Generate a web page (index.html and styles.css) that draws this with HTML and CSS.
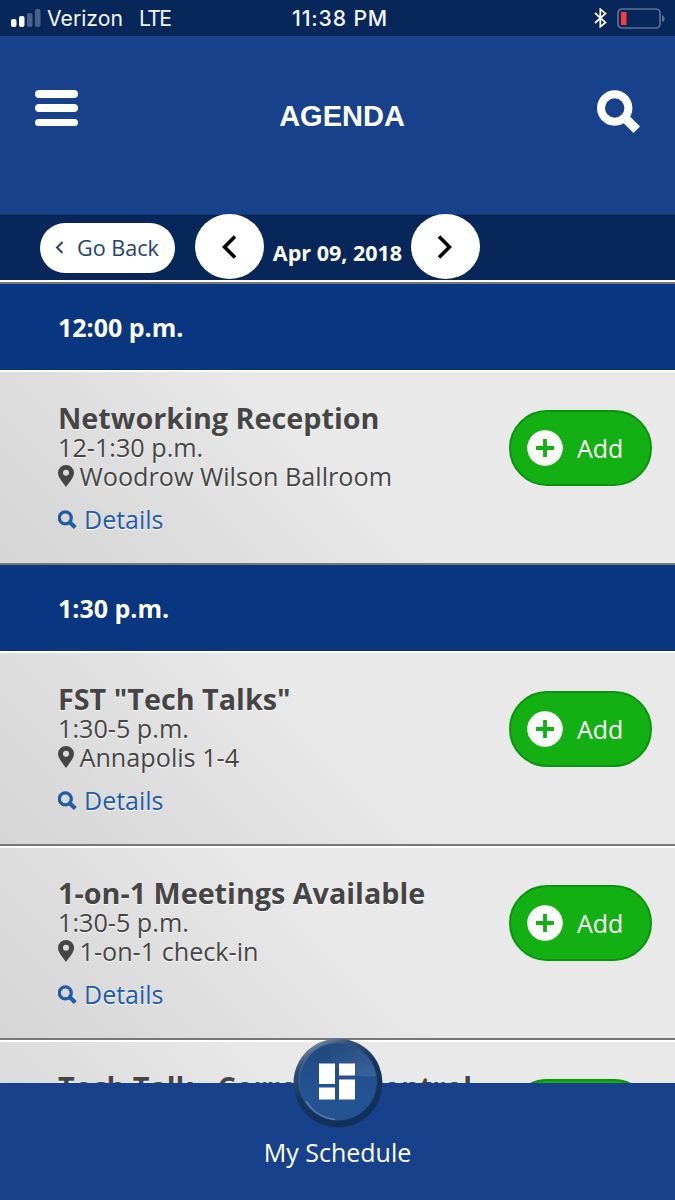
FILE: index.html
```
<!DOCTYPE html>
<html lang="en">
<head>
<meta charset="utf-8">
<title>Agenda</title>
<link rel="stylesheet" href="styles.css">
</head>
<body>
<svg width="0" height="0" class="defs">
  <symbol id="search" viewBox="0 0 43 43"><circle cx="17.7" cy="18" r="13.700" fill="none" stroke="currentColor" stroke-width="8"/><path d="M24.500 31L31 24.500L43 36.500L36.500 43Z" fill="currentColor"/></symbol>
  <symbol id="search-bold" viewBox="0 0 19 19"><circle cx="7.300" cy="7.800" r="6" fill="none" stroke="currentColor" stroke-width="3.300"/><path d="M11.500 12L17.300 17.500" stroke="currentColor" stroke-width="4.200"/></symbol>
  <symbol id="pin" viewBox="0 0 16 22"><path fill="currentColor" fill-rule="evenodd" d="M8 0a8 7.8 0 0 1 8 7.8C16 12.500 11.500 17 8 22C4.500 17 0 12.500 0 7.800A8 7.800 0 0 1 8 0ZM8 4.700a3 3 0 1 0 0 6a3 3 0 0 0 0-6Z"/></symbol>
  <symbol id="plus" viewBox="0 0 36 36"><circle cx="18" cy="18" r="17.800" fill="#fff"/><path d="M18 9v18M9 18h18" stroke="#12b012" stroke-width="3.800"/></symbol>
</svg>
<div class="screen">
  <div class="status">
    <svg class="signal" width="31" height="18" viewBox="0 0 31 18"><rect x="0" y="10" width="5.500" height="8" rx="2" fill="#fff"/><rect x="8" y="7" width="5.500" height="11" rx="2" fill="#fff"/><rect x="16" y="4" width="5.500" height="14" rx="2" fill="#4a6190"/><rect x="24" y="0" width="5.500" height="18" rx="2" fill="#4a6190"/></svg>
    <span class="carrier">Verizon</span><span class="network">LTE</span>
    <span class="clock">11:38 PM</span>
    <svg class="bluetooth" width="13" height="20" viewBox="0 0 13 20"><path d="M1 5L11.500 14.500L6.300 18.800V1.200L11.500 5.500L1 15" fill="none" stroke="#fff" stroke-width="1.700"/></svg>
    <svg class="battery" width="48" height="21" viewBox="0 0 48 21"><rect x="1" y="1" width="42" height="19" rx="4" fill="none" stroke="#5a7099" stroke-width="1.700"/><rect x="4" y="4" width="5.500" height="13" fill="#fb3b34"/><path d="M45 7C48.500 8 48.500 13 45 14Z" fill="#5a7099"/></svg>
  </div>
  <header class="header">
    <div class="menu"><i></i><i></i><i></i></div>
    <h1 class="title">AGENDA</h1>
    <svg class="find" width="43" height="43"><use href="#search"/></svg>
  </header>
  <nav class="datebar">
    <div class="back"><svg width="9" height="13" viewBox="0 0 9 13"><path d="M7.500 1L2 6.500L7.500 12" fill="none" stroke="#24426e" stroke-width="2"/></svg><span>Go Back</span></div>
    <div class="arrow"><svg width="15" height="24" viewBox="0 0 15 24"><path d="M13 1.500L2.500 12L13 22.500" fill="none" stroke="#000" stroke-width="3.600"/></svg></div>
    <span class="date">Apr 09, 2018</span>
    <div class="arrow next"><svg width="15" height="24" viewBox="0 0 15 24"><path d="M2 1.500L12.500 12L2 22.500" fill="none" stroke="#000" stroke-width="3.600"/></svg></div>
  </nav>
  <main class="list">
    <div class="hour">12:00 p.m.</div>
    <article class="item">
      <div class="info"><h2 class="name">Networking Reception</h2><div class="time">12-1:30 p.m.</div><div class="place"><svg width="16" height="22"><use href="#pin"/></svg>Woodrow Wilson Ballroom</div><div class="details"><svg width="19" height="19"><use href="#search-bold"/></svg>Details</div></div>
      <div class="add"><svg width="36" height="36"><use href="#plus"/></svg>Add</div>
    </article>
    <div class="hour">1:30 p.m.</div>
    <article class="item">
      <div class="info"><h2 class="name">FST "Tech Talks"</h2><div class="time">1:30-5 p.m.</div><div class="place"><svg width="16" height="22"><use href="#pin"/></svg>Annapolis 1-4</div><div class="details"><svg width="19" height="19"><use href="#search-bold"/></svg>Details</div></div>
      <div class="add"><svg width="36" height="36"><use href="#plus"/></svg>Add</div>
    </article>
    <article class="item">
      <div class="info"><h2 class="name">1-on-1 Meetings Available</h2><div class="time">1:30-5 p.m.</div><div class="place"><svg width="16" height="22"><use href="#pin"/></svg>1-on-1 check-in</div><div class="details"><svg width="19" height="19"><use href="#search-bold"/></svg>Details</div></div>
      <div class="add"><svg width="36" height="36"><use href="#plus"/></svg>Add</div>
    </article>
    <article class="item">
      <div class="info"><h2 class="name">Tech Talk - Corrosion Control</h2></div>
      <div class="add"><svg width="36" height="36"><use href="#plus"/></svg>Add</div>
    </article>
  </main>
  <footer class="footer">
    <svg class="orb" width="92" height="92" viewBox="0 0 92 92">
      <defs>
        <linearGradient id="rim" x1=".2" y1="0" x2=".7" y2="1"><stop offset="0" stop-color="#8c9db4"/><stop offset=".2" stop-color="#345173"/><stop offset=".5" stop-color="#15355f"/><stop offset="1" stop-color="#102f59"/></linearGradient>
        <linearGradient id="face" x1="0" y1="0" x2="0" y2="1"><stop offset="0" stop-color="#20477b"/><stop offset=".6" stop-color="#245394"/></linearGradient>
        <linearGradient id="gloss" x1="0" y1="0" x2="1" y2=".6"><stop offset=".2" stop-color="#8ba9d0" stop-opacity=".05"/><stop offset="1" stop-color="#8ba9d0" stop-opacity=".2"/></linearGradient>
        <linearGradient id="edge" x1="0" y1="0" x2="1" y2="1"><stop offset="0" stop-color="#567398"/><stop offset=".5" stop-color="#2b527f" stop-opacity=".3"/><stop offset="1" stop-color="#2b527f" stop-opacity="0"/></linearGradient>
      </defs>
      <circle cx="46" cy="46" r="44.500" fill="url(#rim)"/>
      <circle cx="46" cy="44.500" r="39" fill="url(#face)" stroke="url(#edge)" stroke-width="1.500"/>
      <path d="M38 7A38 38 0 0 1 84 39Q61 42 44 30Q36 22 38 7Z" fill="url(#gloss)"/>
      <path d="M14 64A38 38 0 0 0 43 82.500" fill="none" stroke="#8fa9c8" stroke-width="1.500" opacity=".5"/>
      <path d="M27 26.500h16v20.500h-16ZM47 26.500h16v12h-16ZM27 50.500h16v12h-16ZM47 42.500h16v20h-16Z" fill="#fff"/>
    </svg>
    <span class="caption">My Schedule</span>
  </footer>
</div>
</body>
</html>
```

FILE: styles.css
```
body { margin: 0; background: #17428b; }
svg { display: block; flex: none; }
.defs { position: absolute; }
.screen { width: 675px; height: 1200px; overflow: hidden; display: flex; flex-direction: column; font-family: "Open Sans", sans-serif; }
.status { height: 36px; flex: none; background: #07275a; color: #f4f7fd; display: flex; align-items: center; font: 21.2px/36px Inter, sans-serif; white-space: nowrap; }
.signal { margin: 0 5px 0 11px; }
.carrier { width: 92px; }
.network { width: 153px; letter-spacing: -1.7px; }
.clock { width: 302px; font-weight: 500; letter-spacing: 0.85px; }
.bluetooth { margin-right: 10px; }
.header { height: 178px; flex: none; box-sizing: border-box; padding: 54px 35px 0; display: flex; justify-content: space-between; align-items: flex-start; background: #17428b; color: #fff; }
.menu { width: 43px; display: flex; flex-direction: column; gap: 6.7px; }
.menu i { height: 7.6px; border-radius: 4px; background: #fff; }
.title { margin: 8px 0 0 9px; font: bold 29px/36px "Liberation Sans", sans-serif; }
.datebar { height: 66px; flex: none; display: flex; align-items: flex-start; box-sizing: border-box; background: #07275a; border-top: 1px solid #143969; padding-left: 40px; }
.back { width: 135px; height: 50px; margin: 8px 20px 0 0; box-sizing: border-box; padding: 0 0 2px 15px; border-radius: 25px; background: #fff; color: #24426e; display: flex; align-items: center; gap: 13px; font-size: 21.6px; white-space: nowrap; }
.arrow { width: 69px; height: 65px; margin-top: -1px; border-radius: 50%; background: #fff; display: flex; align-items: center; justify-content: center; }
.next { padding-right: 3px; box-sizing: border-box; }
.date { width: 147px; padding-top: 23px; text-align: center; color: #fff; font-size: 21.5px; line-height: 30px; font-weight: 700; white-space: nowrap; }
.list { flex: 1; min-height: 0; overflow: hidden; border-top: 2px solid #fff; }
.hour { height: 86px; box-sizing: border-box; padding-left: 58px; background: #093680; color: #fff; font-size: 25px; line-height: 87px; font-weight: 700; }
.hour:first-child { height: 88px; border-top: 2px solid #77777b; line-height: 86px; }
.item { height: 194px; box-sizing: border-box; padding: 28px 23px 0 58px; display: flex; justify-content: space-between; border-top: 2px solid #fff; border-bottom: 2px solid #777; background: linear-gradient(45deg, #d6d6d6 0%, #dadada 15%, #e2e2e2 35%, #e9e9e9 52%); color: #454545; text-shadow: 0 1px 1px #fff; white-space: nowrap; }
.hour + .item { height: 195px; padding-top: 29px; }
.name { margin: 0; font-size: 28.75px; line-height: 33px; font-weight: 700; }
.time, .place { font-size: 25.2px; line-height: 29px; }
.time { margin-top: -1px; }
.place, .details { display: flex; align-items: center; gap: 6px; }
.place svg { margin-top: -1px; margin-left: -0.5px; }
.details { margin-top: 14px; gap: 7px; font-size: 25px; line-height: 29px; color: #215ca6; }
.add { width: 143px; height: 76px; margin: 9px 0 0; box-sizing: border-box; padding: 0 0 0 16px; border: 2px solid #0a930d; border-radius: 38px; background: #12b012; display: flex; align-items: center; gap: 14px; font-size: 25px; line-height: 32px; color: #fff; text-shadow: none; }
.footer { height: 117px; flex: none; background: #17428b; color: #fff; display: flex; flex-direction: column; align-items: center; position: relative; }
.orb { margin-top: -46px; }
.caption { margin-top: 6px; font-size: 25px; line-height: 34px; }
```
